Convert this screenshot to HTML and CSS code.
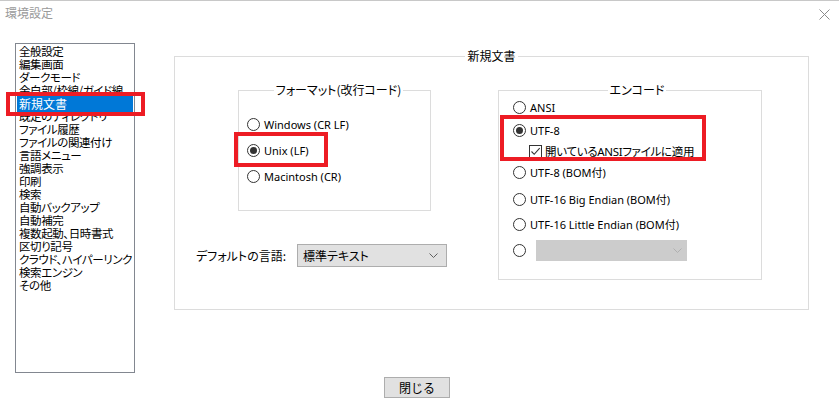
FILE: index.html
```html
<!DOCTYPE html>
<html lang="ja">
<head>
<meta charset="utf-8">
<title>環境設定</title>
<link rel="stylesheet" href="styles.css">
</head>
<body>
<div class="window">
  <div class="titlebar">
    <span class="title">環境設定</span>
    <svg class="close" width="11" height="11" viewBox="0 0 11 11"><path d="M0.5 0.5 L10.5 10.5 M10.5 0.5 L0.5 10.5" stroke="#8a8a8a" stroke-width="1" fill="none"/></svg>
  </div>
  <div class="main">
    <ul class="listbox">
      <li>全般設定</li>
      <li>編集画面</li>
      <li>ダークモード</li>
      <li>余白部/枠線/ガイド線</li>
      <li class="selected">新規文書</li>
      <li>既定のディレクトリ</li>
      <li>ファイル履歴</li>
      <li>ファイルの関連付け</li>
      <li>言語メニュー</li>
      <li>強調表示</li>
      <li>印刷</li>
      <li>検索</li>
      <li>自動バックアップ</li>
      <li>自動補完</li>
      <li>複数起動、日時書式</li>
      <li>区切り記号</li>
      <li>クラウド、ハイパーリンク</li>
      <li>検索エンジン</li>
      <li>その他</li>
    </ul>
    <div class="group outer">
      <div class="legend"><span>新規文書</span></div>
      <div class="outer-body">
        <div class="left-col">
          <div class="group format">
            <div class="legend"><span>フォーマット(改行コード)</span></div>
            <div class="opt opt-win"><span class="radio"></span><span>Windows (CR LF)</span></div>
            <div class="opt opt-next"><span class="radio checked"></span><span>Unix (LF)</span></div>
            <div class="opt opt-next"><span class="radio"></span><span>Macintosh (CR)</span></div>
          </div>
          <div class="lang-row">
            <span class="lang-label">デフォルトの言語:</span>
            <div class="select">
              <span>標準テキスト</span>
              <svg width="9" height="5" viewBox="0 0 9 5"><path d="M0.5 0.5 L4.5 4.5 L8.5 0.5" stroke="#606060" fill="none"/></svg>
            </div>
          </div>
        </div>
        <div class="group encode">
          <div class="legend"><span>エンコード</span></div>
          <div class="opt e1"><span class="radio"></span><span>ANSI</span></div>
          <div class="opt e2"><span class="radio checked"></span><span>UTF-8</span></div>
          <div class="opt e3 sub"><span class="check"><svg width="11" height="11" viewBox="0 0 11 11"><path d="M1.5 5.5 L4.2 8.3 L9.7 2.2" stroke="#333" stroke-width="1.1" fill="none"/></svg></span><span>開いているANSIファイルに適用</span></div>
          <div class="opt e4"><span class="radio"></span><span>UTF-8 (BOM付)</span></div>
          <div class="opt e5"><span class="radio"></span><span>UTF-16 Big Endian (BOM付)</span></div>
          <div class="opt e6"><span class="radio"></span><span>UTF-16 Little Endian (BOM付)</span></div>
          <div class="opt e7"><span class="radio"></span>
            <div class="combo"><svg width="9" height="5" viewBox="0 0 9 5"><path d="M0.5 0.5 L4.5 4.5 L8.5 0.5" stroke="#b0b0b0" fill="none"/></svg></div>
          </div>
        </div>
      </div>
    </div>
  </div>
  <div class="footer">
    <button class="btn">閉じる</button>
  </div>
  <div class="mark mark-list"></div>
  <div class="mark mark-unix"></div>
  <div class="mark mark-utf8"></div>
</div>
</body>
</html>
```

FILE: styles.css
```css
* { box-sizing: border-box; }
html, body { margin: 0; padding: 0; background: #fff; }
body {
  width: 839px;
  height: 407px;
  overflow: hidden;
  font-family: "Noto Sans", "Noto Sans CJK JP", sans-serif;
  font-size: 11px;
  color: #000;
}
.window {
  position: relative;
  width: 839px;
  height: 407px;
  border-top: 1px solid #c8c8c8;
}
.titlebar {
  height: 42px;
  display: flex;
  justify-content: space-between;
  align-items: flex-start;
  padding: 5px 9px 0 5px;
}
.title {
  font-family: "Noto Sans CJK JP", sans-serif;
  font-size: 12px;
  line-height: 14px;
  color: #9a9a9a;
}
.close { margin-top: 3px; }
.main {
  display: flex;
  align-items: flex-start;
  padding-left: 15px;
}
.listbox {
  list-style: none;
  margin: 0;
  padding: 1px 1px 0 1px;
  width: 120px;
  height: 330px;
  border: 1px solid #828790;
  overflow: hidden;
  font-family: "Noto Sans CJK JP", sans-serif;
  font-feature-settings: "palt";
  font-size: 11.5px;
  letter-spacing: -0.4px;
  line-height: 13px;
}
.listbox li {
  height: 13px;
  white-space: nowrap;
  padding-left: 2px;
}
.listbox li.selected {
  background: #0078d7;
  color: #fff;
  height: 16px;
  line-height: 16px;
  margin: -1px 0 -2px;
  position: relative;
  font-size: 12px;
  letter-spacing: 0;
}
.group {
  border: 1px solid #dcdcdc;
}
.legend {
  display: flex;
  justify-content: center;
  height: 14px;
  margin-top: -8px;
  line-height: 14px;
  font-family: "Noto Sans CJK JP", sans-serif;
  font-feature-settings: "palt";
  font-size: 12px;
}
.legend span {
  background: #fff;
  padding: 0 2px;
}
.outer {
  margin-left: 39px;
  margin-top: 13px;
  width: 635px;
  height: 254px;
}
.outer-body {
  display: flex;
  align-items: flex-start;
  padding-left: 21px;
  margin-top: 27px;
}
.left-col {
  width: 251px;
  display: flex;
  flex-direction: column;
}
.format {
  margin-left: 42px;
  width: 193px;
  height: 121px;
  padding-left: 8px;
}
.opt {
  display: flex;
  align-items: center;
  height: 16px;
  white-space: nowrap;
}
.opt-win { margin-top: 19px; }
.opt-next { margin-top: 10px; }
.radio {
  flex: none;
  width: 13px;
  height: 13px;
  border: 1px solid #333;
  border-radius: 50%;
  margin-right: 4px;
  display: flex;
  align-items: center;
  justify-content: center;
  background: #fff;
}
.radio.checked::after {
  content: "";
  width: 7px;
  height: 7px;
  border-radius: 50%;
  background: #333;
}
.check {
  flex: none;
  width: 13px;
  height: 13px;
  border: 1px solid #333;
  margin-right: 3px;
  display: flex;
  align-items: center;
  justify-content: center;
}
.lang-row {
  display: flex;
  align-items: center;
  margin-top: 33px;
  height: 23px;
}
.lang-label {
  width: 101px;
  font-family: "Noto Sans CJK JP", sans-serif;
  font-feature-settings: "palt";
  font-size: 12px;
  white-space: nowrap;
}
.select {
  width: 150px;
  height: 23px;
  background: #e1e1e1;
  border: 1px solid #adadad;
  display: flex;
  align-items: center;
  justify-content: space-between;
  padding: 0 8px 0 5px;
  font-family: "Noto Sans CJK JP", sans-serif;
  font-feature-settings: "palt";
  font-size: 12px;
}
.encode {
  margin-left: 51px;
  width: 264px;
  height: 190px;
  padding-left: 14px;
}
.e1 { margin-top: 2px; }
.e2 { margin-top: 7px; }
.e3 {
  margin-top: 5px;
  padding-left: 16px;
  font-family: "Noto Sans", "Noto Sans CJK JP", sans-serif;
  font-feature-settings: "palt";
  font-size: 11.5px;
  letter-spacing: -0.3px;
}
.e4 { margin-top: 5px; }
.e5 { margin-top: 11px; }
.e6 { margin-top: 9px; }
.e7 { margin-top: 8px; height: 21px; }
.e7 .radio { margin-right: 10px; }
.combo {
  width: 151px;
  height: 21px;
  background: #cccccc;
  display: flex;
  align-items: center;
  justify-content: flex-end;
  padding-right: 5px;
}
.footer {
  display: flex;
  justify-content: center;
  padding-right: 5px;
  margin-top: 4px;
}
.btn {
  width: 66px;
  height: 21px;
  background: #e1e1e1;
  border: 1px solid #adadad;
  border-radius: 0;
  font-family: "Noto Sans CJK JP", sans-serif;
  font-size: 12px;
  color: #000;
  padding: 0;
}
.mark {
  position: absolute;
  border: 4px solid #ed1c24;
}
.mark-list { left: 6px; top: 91px; width: 139px; height: 24px; }
.mark-unix { left: 234px; top: 131px; width: 94px; height: 35px; }
.mark-utf8 { left: 500px; top: 114px; width: 206px; height: 46px; }
```
